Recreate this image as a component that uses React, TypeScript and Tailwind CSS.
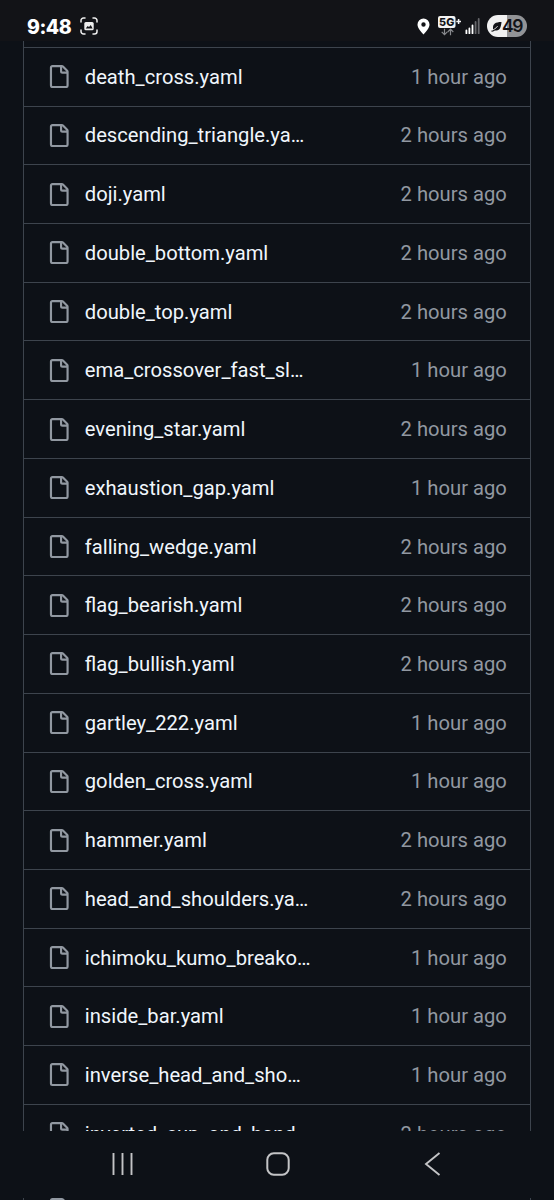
import React from "react";

interface FileEntry {
  name: string;
  age: string;
}

const files: FileEntry[] = [
  { name: "death_cross.yaml", age: "1 hour ago" },
  { name: "descending_triangle.ya…", age: "2 hours ago" },
  { name: "doji.yaml", age: "2 hours ago" },
  { name: "double_bottom.yaml", age: "2 hours ago" },
  { name: "double_top.yaml", age: "2 hours ago" },
  { name: "ema_crossover_fast_sl…", age: "1 hour ago" },
  { name: "evening_star.yaml", age: "2 hours ago" },
  { name: "exhaustion_gap.yaml", age: "1 hour ago" },
  { name: "falling_wedge.yaml", age: "2 hours ago" },
  { name: "flag_bearish.yaml", age: "2 hours ago" },
  { name: "flag_bullish.yaml", age: "2 hours ago" },
  { name: "gartley_222.yaml", age: "1 hour ago" },
  { name: "golden_cross.yaml", age: "1 hour ago" },
  { name: "hammer.yaml", age: "2 hours ago" },
  { name: "head_and_shoulders.ya…", age: "2 hours ago" },
  { name: "ichimoku_kumo_breako…", age: "1 hour ago" },
  { name: "inside_bar.yaml", age: "1 hour ago" },
  { name: "inverse_head_and_sho…", age: "1 hour ago" },
  { name: "inverted_cup_and_hand…", age: "2 hours ago" },
];

const FileIcon = () => (
  <svg className="h-[23.1px] w-[23.1px] shrink-0" viewBox="0 0 16 16" fill="#9198a1">
    <path d="M2 1.75C2 .784 2.784 0 3.75 0h6.586c.464 0 .909.184 1.237.513l2.914 2.914c.329.328.513.773.513 1.237v9.586A1.75 1.75 0 0 1 13.25 16h-9.5A1.75 1.75 0 0 1 2 14.25Zm1.75-.25a.25.25 0 0 0-.25.25v12.5c0 .138.112.25.25.25h9.5a.25.25 0 0 0 .25-.25V6h-2.75A1.75 1.75 0 0 1 9 4.25V1.5Zm6.75.062V4.25c0 .138.112.25.25.25h2.688l-.011-.013-2.914-2.914-.013-.011Z" />
  </svg>
);

const FileRow: React.FC<{ file: FileEntry }> = ({ file }) => (
  <div className="flex h-[58.72px] shrink-0 items-center border-t border-[#3d444d] pl-[23.3px] pr-[23.2px] text-[20.2px]">
    <FileIcon />
    <span className="ml-[14.4px] whitespace-nowrap leading-[30px] text-[#f0f6fc]">{file.name}</span>
    <span className="ml-auto whitespace-nowrap leading-[30px] text-[#9198a1]">{file.age}</span>
  </div>
);

const StatusBar = () => (
  <header className="flex h-[41px] shrink-0 items-center bg-[#121317] px-[27px] pt-[11px] text-white">
    <span className="w-[44px] pt-px font-['Inter'] text-[19.5px] font-extrabold leading-[30px] tracking-[-0.5px]">9:48</span>
    {/* screenshot indicator */}
    <svg className="ml-[9px] h-[18px] w-[18px]" viewBox="0 0 18 18" fill="none">
      <path d="M1 5V3.5A2.5 2.5 0 0 1 3.5 1H5M13 1h1.5A2.5 2.5 0 0 1 17 3.5V5M17 13v1.5a2.5 2.5 0 0 1-2.5 2.500H13M5 17H3.5A2.5 2.5 0 0 1 1 14.5V13" stroke="#eee" strokeWidth="1.5" strokeLinecap="round" />
      <rect x="4.3" y="5" width="9.4" height="8.3" rx="1.5" fill="#eee" />
      <path d="M5.700 11.500l2-2.600 1.300 1.200 1.800-2.200 1.800 3.600z" fill="#121317" />
    </svg>
    {/* location */}
    <svg className="ml-auto h-[17px] w-[13px]" viewBox="0 0 13 17">
      <path fillRule="evenodd" d="M6.5.5a6 6 0 0 0-6 6c0 3.600 3 6.500 6 10 3-3.500 6-6.400 6-10a6 6 0 0 0-6-6Zm0 3.800a2.200 2.200 0 1 1 0 4.400 2.200 2.200 0 0 1 0-4.400Z" fill="#fff" />
    </svg>
    {/* network type */}
    <svg className="ml-[8px] h-[20px] w-[23px]" viewBox="0 0 23 20">
      <rect x="0" y="0" width="17.5" height="12" rx="2" fill="#f3f3f3" />
      <text x="8.700" y="9.900" textAnchor="middle" fontFamily="Inter, sans-serif" fontSize="10.800" fontWeight="800" fill="#121317">5G</text>
      <path d="M18.300 5.500h4.700M20.600 3.100v4.800" stroke="#f3f3f3" strokeWidth="1.500" />
      <path d="M6.500 12.800v6M3.700 15.800L6.500 18.600 9.300 15.800M12.500 19.200v-6M9.700 16L12.500 13.200l2.800 2.800" stroke="#88898d" strokeWidth="1.200" fill="none" />
    </svg>
    {/* signal */}
    <svg className="ml-[4px] h-[16px] w-[15px]" viewBox="0 0 15 16">
      <path d="M1.400 12.500v2.800M4.400 10.500v4.800M7.500 7.500v7.800" stroke="#fff" strokeWidth="1.800" strokeLinecap="round" />
      <path d="M10.600 4v11.300M13.700 1v14.300" stroke="#66676b" strokeWidth="1.800" strokeLinecap="round" />
    </svg>
    {/* battery */}
    <div className="ml-[7px] flex h-[22px] w-[40px] items-center overflow-hidden rounded-full bg-linear-to-r from-[#f1f1f1] from-49% to-[#929396] to-49% text-[#121317]">
      <svg className="ml-[3.5px] h-[11px] w-[11px] shrink-0" viewBox="0 0 11 11">
        <path d="M2 7.500C1.500 3 4.500 1 10.500 1 10 5.500 9 9.500 5.500 9.500c-1 0-1.600-.2-2.200-.6Z" fill="#121317" />
        <path d="M.5 10.200c2 0 4-1.600 6-4.700" stroke="#121317" strokeWidth="1.300" fill="none" />
        <path d="M3 8.300c1.500-.7 2.700-1.800 3.700-3.300" stroke="#f1f1f1" strokeWidth=".8" fill="none" />
      </svg>
      <span className="ml-[0.500px] font-['Inter'] text-[17.500px] font-semibold leading-[22px] tracking-[-1.300px]">49</span>
    </div>
  </header>
);

const NavBar = () => (
  <nav className="flex h-[67px] shrink-0 items-center justify-between pb-px pl-[110px] pr-[109px]">
    <svg className="h-6 w-6" viewBox="0 0 24 24">
      <path d="M3.500 1v22M12.500 1v22M21.500 1v22" stroke="#c3c4c6" strokeWidth="1.900" />
    </svg>
    <svg className="h-6 w-6" viewBox="0 0 24 24">
      <rect x="1.300" y="1.300" width="21.400" height="21.400" rx="6.500" fill="none" stroke="#c3c4c6" strokeWidth="2" />
    </svg>
    <svg className="h-6 w-6" viewBox="0 0 24 24">
      <path d="M18.500 1L5 12l13.500 11" fill="none" stroke="#c3c4c6" strokeWidth="1.900" />
    </svg>
  </nav>
);

export default function App() {
  return (
    <div className="flex h-[1200px] w-[554px] flex-col overflow-hidden bg-[#0d1117] font-['Roboto',sans-serif]">
      <StatusBar />
      <main className="flex min-h-0 flex-1 flex-col overflow-hidden px-[23px]">
        <div className="flex min-h-0 flex-1 flex-col overflow-hidden border-x border-[#3d444d] pt-[5.9px]">
          {files.map((file) => (
            <FileRow key={file.name} file={file} />
          ))}
        </div>
      </main>
      <NavBar />
      {/* sliver of the list below the navigation bar */}
      <div className="flex h-[2px] shrink-0 px-[23px]">
        <div className="flex flex-1 items-start overflow-hidden border-x border-[#3d444d] pl-[23.3px]">
          <FileIcon />
        </div>
      </div>
    </div>
  );
}
